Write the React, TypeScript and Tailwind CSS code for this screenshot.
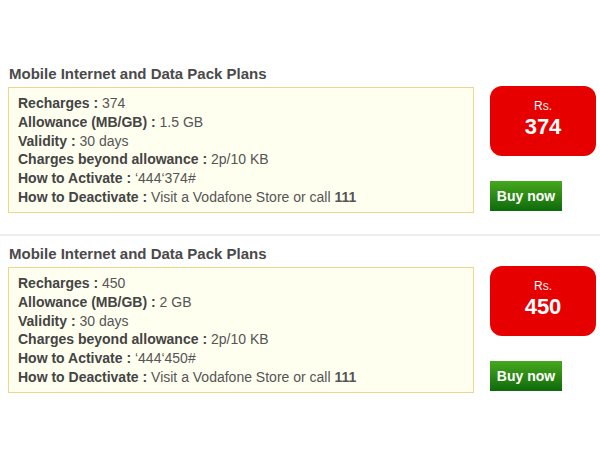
const plans = [
  { price: "374", allowance: "1.5 GB", code: "*444*374#" },
  { price: "450", allowance: "2 GB", code: "*444*450#" },
];

function Row({ label, children }: { label: string; children: React.ReactNode }) {
  return (
    <div className="leading-[18.8px]">
      <span className="font-bold text-[#444]">{label} : </span>
      <span className="text-[#555]">{children}</span>
    </div>
  );
}

function Plan({ price, allowance, code }: { price: string; allowance: string; code: string }) {
  return (
    <div className="flex">
      <div className="w-[466px] ml-2">
        <h2 className="text-[15px] font-bold text-[#4a4a4a] leading-4 pl-px">
          Mobile Internet and Data Pack Plans
        </h2>
        <div className="mt-[5px] h-[126px] border border-[#f0d48a] bg-[#fffff0] pl-[9px] pt-[6px] text-[14px]">
          <Row label="Recharges">{price}</Row>
          <Row label="Allowance (MB/GB)">{allowance}</Row>
          <Row label="Validity">30 days</Row>
          <Row label="Charges beyond allowance">2p/10 KB</Row>
          <Row label="How to Activate">{code.replace(/\*/g, "\u2018")}</Row>
          <Row label="How to Deactivate">
            Visit a Vodafone Store or call <span className="font-bold">111</span>
          </Row>
        </div>
      </div>
      <div className="ml-4 pt-5 flex flex-col">
        <div className="w-[106px] h-[70px] rounded-[12px] bg-[#e60000] text-white flex flex-col items-center pt-[13px]">
          <div className="text-[12px] leading-[14px]">Rs.</div>
          <div className="text-[22px] font-bold leading-[26px] mt-[1px]">{price}</div>
        </div>
        <button className="mt-[25px] w-[72px] h-[30px] bg-gradient-to-b from-[#46a81e] to-[#0b6b0b] text-white font-bold text-[14px]">
          Buy now
        </button>
      </div>
    </div>
  );
}

export default function App() {
  return (
    <div className="w-[600px] h-[450px] bg-white pt-[66px] font-['Liberation_Sans',Arial,sans-serif]">
      <Plan {...plans[0]} />
      <div className="mt-[21px] h-[2px] bg-[#ececec]" />
      <div className="mt-[10px]">
        <Plan {...plans[1]} />
      </div>
    </div>
  );
}
